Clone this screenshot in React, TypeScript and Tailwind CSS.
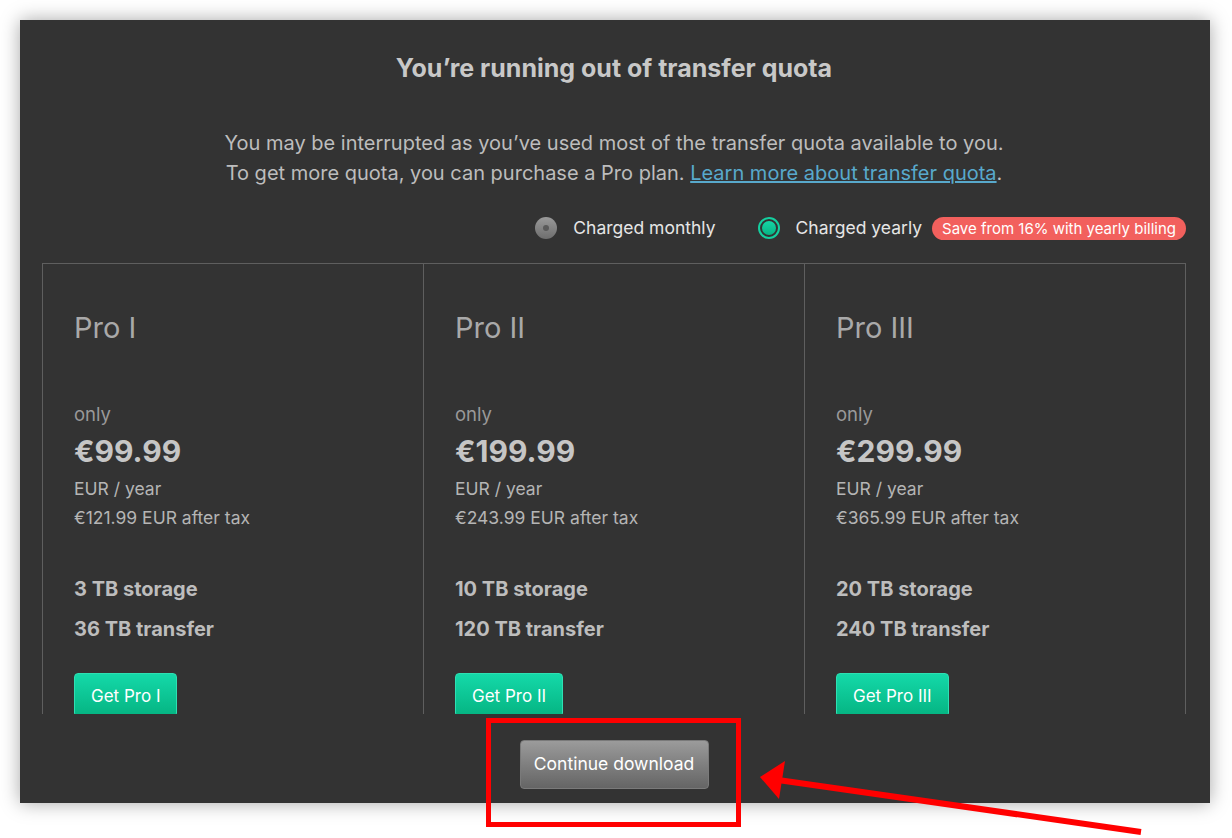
import React from 'react';

type Plan = {
  name: string;
  price: string;
  afterTax: string;
  storage: string;
  transfer: string;
};

const plans: Plan[] = [
  { name: 'Pro I', price: '€99.99', afterTax: '€121.99 EUR after tax', storage: '3 TB storage', transfer: '36 TB transfer' },
  { name: 'Pro II', price: '€199.99', afterTax: '€243.99 EUR after tax', storage: '10 TB storage', transfer: '120 TB transfer' },
  { name: 'Pro III', price: '€299.99', afterTax: '€365.99 EUR after tax', storage: '20 TB storage', transfer: '240 TB transfer' },
];

function PlanCard({ plan, first }: { plan: Plan; first: boolean }) {
  return (
    <div className={`flex-1 pl-[31px] pt-[46px] ${first ? '' : 'border-l border-[#5f5f5f]'}`}>
      <div className="text-[29px] leading-[36px] text-[#a9a9a9]">{plan.name}</div>
      <div className="mt-[56px] text-[18.5px] leading-[24px] text-[#999]">only</div>
      <div className="mt-[7px] text-[30px] leading-[36px] font-bold text-[#c6c6c6]">{plan.price}</div>
      <div className="mt-[7px] text-[17.5px] leading-[26px] text-[#b5b5b5]">EUR / year</div>
      <div className="mt-[3px] text-[17.5px] leading-[26px] text-[#b5b5b5]">{plan.afterTax}</div>
      <div className="mt-[45px] text-[20px] leading-[26px] font-bold text-[#bdbdbd]">{plan.storage}</div>
      <div className="mt-[14px] text-[20px] leading-[26px] font-bold text-[#bdbdbd]">{plan.transfer}</div>
      <button className="mt-[31px] h-[44px] px-[16px] rounded-[4px] border border-[#2ee0b3] bg-gradient-to-b from-[#14d9a9] to-[#05b482] text-[17px] leading-[44px] text-white">
        Get {plan.name}
      </button>
    </div>
  );
}

export default function App() {
  return (
    <div className="relative w-[1232px] h-[838px] bg-white p-5 font-['Inter','Liberation_Sans',sans-serif] overflow-hidden">
      <div className="w-[1190px] bg-[#333333] shadow-[0_0_18px_rgba(0,0,0,0.35)] pl-[22px] pr-[24px] pb-[14px]">
        <h1 className="pt-[36px] text-center text-[25px] leading-[24px] font-bold text-[#c8c8c8]">
          You’re running out of transfer quota
        </h1>
        <p className="mt-[48px] text-center text-[20px] leading-[30px] text-[#bdbdbd]">
          You may be interrupted as you’ve used most of the transfer quota available to you.
          <br />
          To get more quota, you can purchase a Pro plan.{' '}
          <a className="text-[#58a9cc] underline">Learn more about transfer quota</a>.
        </p>

        <div className="mt-[28px] h-[24px] flex items-center justify-end">
          <span className="w-[22px] h-[22px] rounded-full bg-gradient-to-b from-[#9a9a9a] to-[#6e6e6e] flex items-center justify-center">
            <span className="w-[6px] h-[6px] rounded-full bg-[#5a5a5a]" />
          </span>
          <span className="ml-[16px] text-[17.5px] text-[#e6e6e6]">Charged monthly</span>
          <span className="ml-[42px] w-[22px] h-[22px] rounded-full border-2 border-[#14cf9f] flex items-center justify-center">
            <span className="w-[14px] h-[14px] rounded-full bg-gradient-to-b from-[#16d6a6] to-[#06b383]" />
          </span>
          <span className="ml-[16px] text-[17.5px] text-[#e6e6e6]">Charged yearly</span>
          <span className="ml-[10px] h-[23px] px-[10px] rounded-full bg-[#f2605d] text-[15px] leading-[23px] text-white">
            Save from 16% with yearly billing
          </span>
        </div>

        <div className="mt-[23px] h-[451px] overflow-hidden flex border-t border-l border-r border-[#5f5f5f]">
          {plans.map((p, i) => (
            <PlanCard key={p.name} plan={p} first={i === 0} />
          ))}
        </div>

        <div className="mt-[26px] flex justify-center">
          <button className="h-[49px] w-[189px] rounded-[4px] border border-[#7a7a7a] bg-gradient-to-b from-[#9b9b9b] to-[#656565] text-[17.5px] text-white">
            Continue download
          </button>
        </div>
      </div>

      <div className="absolute left-[486px] top-[718px] w-[255px] h-[109px] border-[5px] border-[#ff0000]" />
      <svg className="absolute left-0 top-0" width="1232" height="838" viewBox="0 0 1232 838">
        <line x1="1141" y1="832" x2="778" y2="780" stroke="#ff0000" strokeWidth="6" />
        <polygon points="760,777 785,761 779,799" fill="#ff0000" />
      </svg>
    </div>
  );
}
